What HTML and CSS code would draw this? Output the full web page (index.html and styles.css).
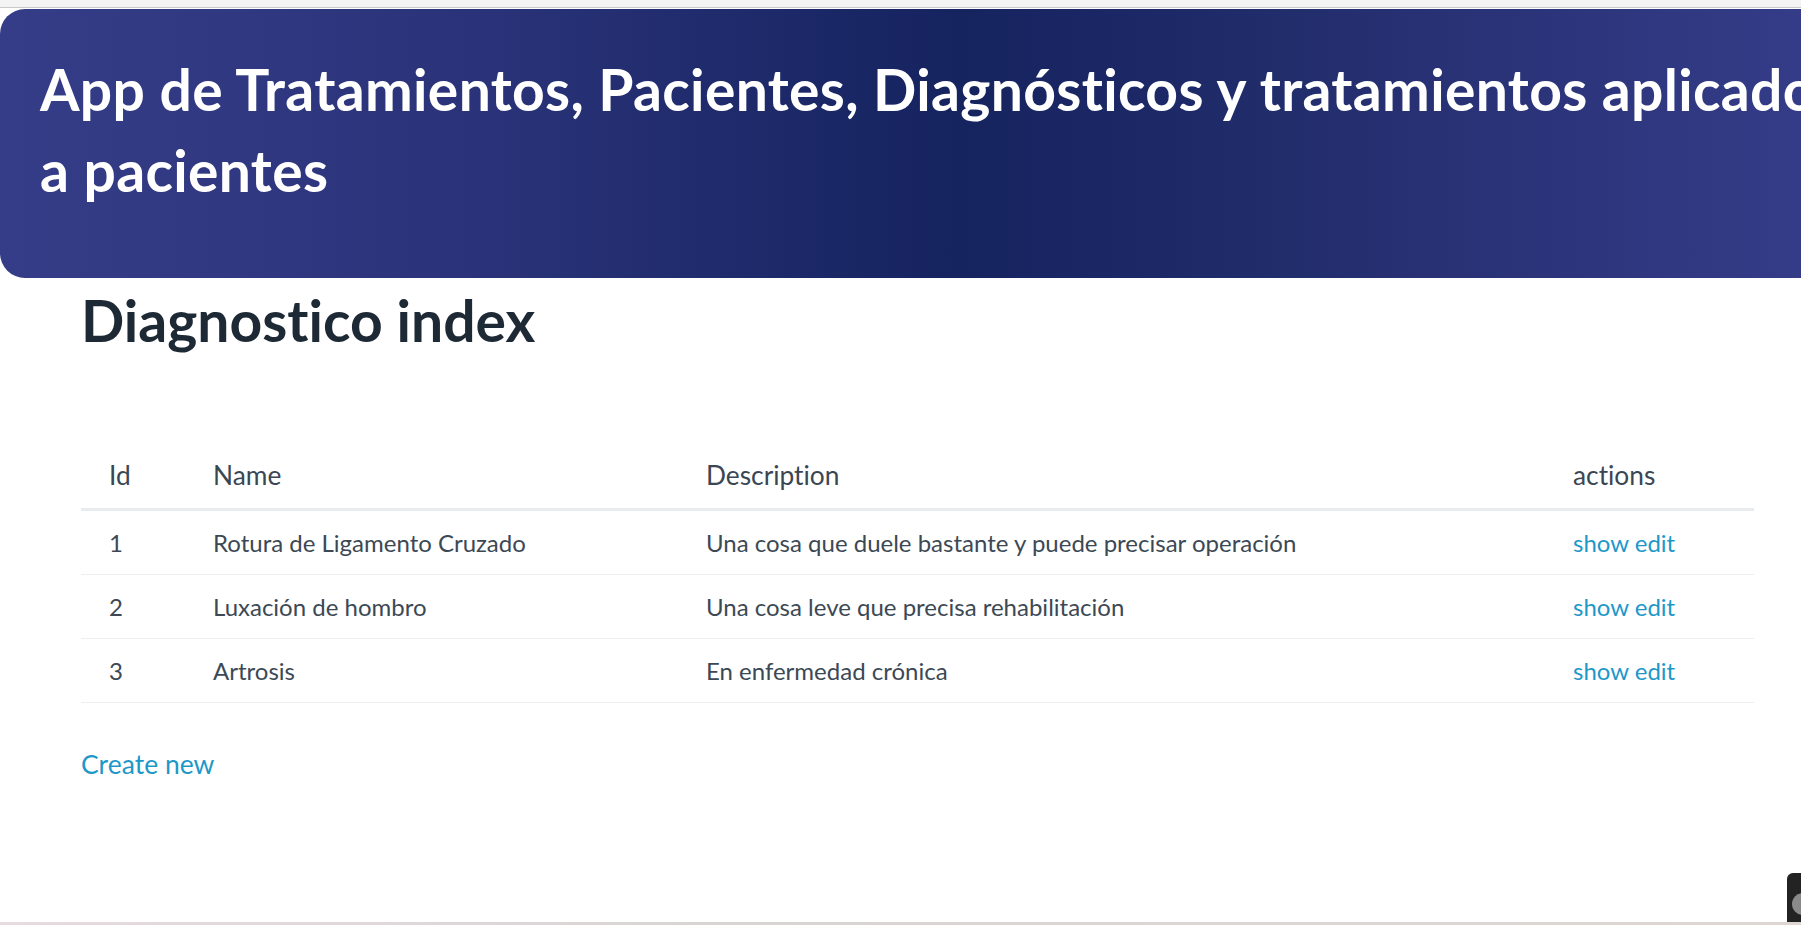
FILE: index.html
```html
<!DOCTYPE html>
<html lang="es">
<head>
<meta charset="utf-8">
<title>Diagnostico index</title>
<link rel="stylesheet" href="styles.css">
</head>
<body>
<div class="chrome-top"></div>
<header class="hero">
  <h1 class="hero-title">App de Tratamientos, Pacientes, Diagnósticos y tratamientos aplicados<br>a pacientes</h1>
</header>
<main class="content">
  <h1 class="page-title">Diagnostico index</h1>
  <table class="table">
    <thead>
      <tr>
        <th class="col-id">Id</th>
        <th class="col-name">Name</th>
        <th class="col-desc">Description</th>
        <th class="col-actions">actions</th>
      </tr>
    </thead>
    <tbody>
      <tr>
        <td>1</td>
        <td>Rotura de Ligamento Cruzado</td>
        <td>Una cosa que duele bastante y puede precisar operación</td>
        <td><a class="link" href="#">show</a> <a class="link" href="#">edit</a></td>
      </tr>
      <tr>
        <td>2</td>
        <td>Luxación de hombro</td>
        <td>Una cosa leve que precisa rehabilitación</td>
        <td><a class="link" href="#">show</a> <a class="link" href="#">edit</a></td>
      </tr>
      <tr>
        <td>3</td>
        <td>Artrosis</td>
        <td>En enfermedad crónica</td>
        <td><a class="link" href="#">show</a> <a class="link" href="#">edit</a></td>
      </tr>
    </tbody>
  </table>
  <a class="link create-link" href="#">Create new</a>
</main>
<div class="taskbar-edge"></div>
<div class="floating-widget"><span class="widget-dot"></span></div>
</body>
</html>
```
FILE: styles.css
```css
html, body {
  margin: 0;
  padding: 0;
  overflow: hidden;
  background: #ffffff;
}

body {
  font-family: Lato, "Open Sans", sans-serif;
  font-variant-ligatures: no-common-ligatures;
  color: #3a4753;
  width: 1801px;
  height: 925px;
  position: relative;
}

.chrome-top {
  height: 7px;
  background: #f3f3f3;
  border-bottom: 1px solid #c9c9c9;
  margin-bottom: 1px;
}

.hero {
  margin-right: -40px;
  height: 269px;
  box-sizing: border-box;
  padding: 40px 0 0 40px;
  border-radius: 25px 0 0 25px;
  background: linear-gradient(90deg, #353d88 0%, #2a3379 26%, #15235f 52%, #222d6c 70%, #363d8a 100%);
}

.hero-title {
  margin: 0;
  color: #ffffff;
  font-family: Lato, "Open Sans", sans-serif;
  font-weight: 700;
  font-size: 57px;
  line-height: 81px;
  letter-spacing: 0.33px;
  white-space: nowrap;
}

.content {
  padding: 0 47px 0 81px;
}

.page-title {
  margin: 8px 0 89px 0;
  color: #1d2935;
  font-weight: 700;
  font-size: 57px;
  line-height: 68px;
}

.table {
  width: 100%;
  border-collapse: collapse;
  table-layout: fixed;
}

.table th {
  text-align: left;
  font-weight: 400;
  font-size: 26.3px;
  line-height: 36px;
  color: #3a4753;
  padding: 14px 28px 15px 28px;
  border-bottom: 3px solid #e9ecef;
}

.table td {
  font-size: 24px;
  line-height: 36px;
  color: #3c4955;
  padding: 13.5px 28px;
  border-bottom: 1px solid #eceeef;
  white-space: nowrap;
}

.col-id { width: 104px; box-sizing: border-box; }
.col-name { width: 493px; box-sizing: border-box; }
.col-desc { width: 867px; box-sizing: border-box; }
.col-actions { width: 209px; box-sizing: border-box; }

.link {
  color: #1d98c9;
  text-decoration: none;
}

.create-link {
  display: inline-block;
  margin-top: 43px;
  font-size: 26.5px;
  line-height: 36px;
}

.taskbar-edge {
  position: absolute;
  left: 0;
  right: 0;
  bottom: 0;
  height: 3px;
  background: linear-gradient(90deg, #e6dbe0 0%, #d9d4d4 40%, #ddd6d2 100%);
}

.floating-widget {
  position: absolute;
  right: 0;
  bottom: 3px;
  width: 14px;
  height: 49px;
  background: #232323;
  border-radius: 6px 0 0 0;
  overflow: hidden;
}

.widget-dot {
  position: absolute;
  left: 5px;
  top: 20px;
  width: 22px;
  height: 22px;
  border-radius: 50%;
  background: #8a8a8a;
}
```
